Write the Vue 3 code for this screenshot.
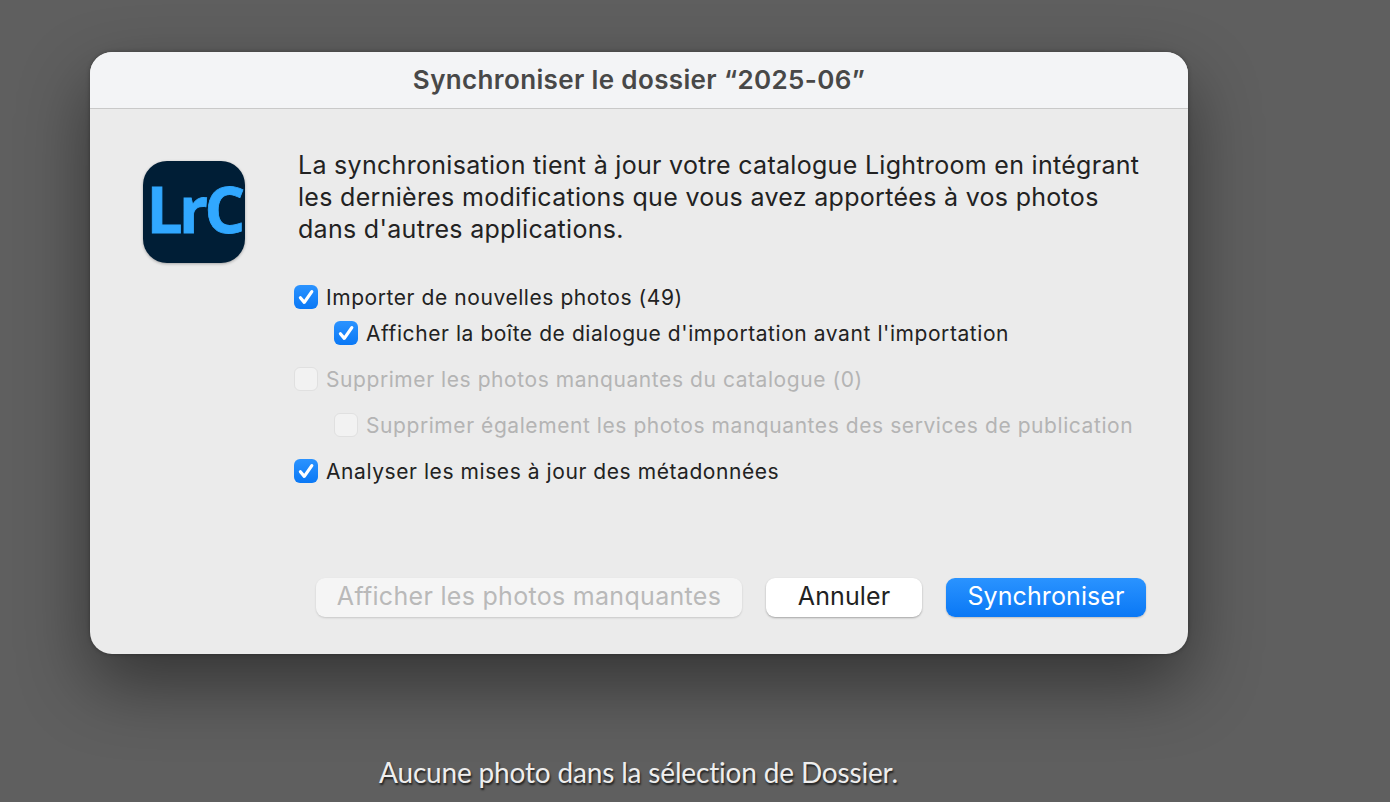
<template>
  <div class="desktop">
    <div class="dialog">
      <div class="titlebar">Synchroniser le dossier “2025-06”</div>
      <div class="body">
        <div class="intro">
          <div class="app-icon"><span>LrC</span></div>
          <p class="message">
            La synchronisation tient à jour votre catalogue Lightroom en intégrant<br />
            les dernières modifications que vous avez apportées à vos photos<br />
            dans d'autres applications.
          </p>
        </div>
        <div class="options">
          <div
            v-for="opt in options"
            :key="opt.label"
            class="option"
            :class="{ sub: opt.sub, disabled: !opt.checked, spaced: opt.spaced }"
          >
            <span class="box" :class="{ checked: opt.checked }">
              <svg v-if="opt.checked" viewBox="0 0 24 24" width="24" height="24">
                <path d="M6.4 12.8 L10.3 17.4 L17.8 6.6" fill="none" stroke="#fff" stroke-width="3.2" stroke-linecap="round" stroke-linejoin="round" />
              </svg>
            </span>
            <span>{{ opt.label }}</span>
          </div>
        </div>
        <div class="actions">
          <button class="btn btn-disabled">Afficher les photos manquantes</button>
          <button class="btn btn-cancel">Annuler</button>
          <button class="btn btn-primary">Synchroniser</button>
        </div>
      </div>
    </div>
    <div class="status">Aucune photo dans la sélection de Dossier.</div>
  </div>
</template>

<script setup>
const options = [
  { label: 'Importer de nouvelles photos (49)', checked: true, sub: false, spaced: false },
  { label: "Afficher la boîte de dialogue d'importation avant l'importation", checked: true, sub: true, spaced: false },
  { label: 'Supprimer les photos manquantes du catalogue (0)', checked: false, sub: false, spaced: true },
  { label: 'Supprimer également les photos manquantes des services de publication', checked: false, sub: true, spaced: true },
  { label: 'Analyser les mises à jour des métadonnées', checked: true, sub: false, spaced: true }
]
</script>

<style>
html, body {
  margin: 0;
  background: #5f5f5f;
}
</style>

<style scoped>
.desktop {
  width: 1390px;
  height: 802px;
  overflow: hidden;
  box-sizing: border-box;
  padding: 52px 0 0 90px;
  background: #5f5f5f;
  font-family: Inter, "Liberation Sans", sans-serif;
}

.dialog {
  width: 1098px;
  height: 602px;
  border-radius: 22px;
  background: #ebebeb;
  overflow: hidden;
  box-shadow: 0 30px 70px rgba(0, 0, 0, 0.45), 0 0 4px rgba(0, 0, 0, 0.3);
  display: flex;
  flex-direction: column;
}

.titlebar {
  height: 57px;
  box-sizing: border-box;
  padding-bottom: 2px;
  border-bottom: 1px solid #c9c9c9;
  background: #f3f4f6;
  display: flex;
  align-items: center;
  justify-content: center;
  font-size: 26px;
  font-weight: 600;
  letter-spacing: 0.36px;
  color: #484848;
}

.body {
  flex: 1;
  display: flex;
  flex-direction: column;
  padding: 40px 42px 37px 53px;
}

.intro {
  display: flex;
  gap: 53px;
}

.app-icon {
  width: 102px;
  height: 102px;
  margin-top: 12px;
  border-radius: 24px;
  background: #001e36;
  display: flex;
  align-items: center;
  justify-content: center;
  box-shadow: 0 1px 3px rgba(0, 0, 0, 0.3);
}

.app-icon span {
  padding-bottom: 6px;
  font-family: "Open Sans", sans-serif;
  font-weight: 700;
  font-size: 64px;
  line-height: 1.2;
  letter-spacing: -3.6px;
  -webkit-text-stroke: 0.8px #31a8ff;
  color: #31a8ff;
}

.message {
  margin: 0;
  font-size: 25px;
  letter-spacing: 0.3px;
  line-height: 32px;
  color: #222;
  white-space: nowrap;
}

.options {
  margin-top: 16px;
  margin-left: 151px;
  display: flex;
  flex-direction: column;
  font-size: 21px;
  letter-spacing: 0.57px;
  color: #222;
}

.option {
  height: 36px;
  display: flex;
  align-items: center;
  gap: 8px;
}

.option.disabled {
  color: #b4b4b4;
}

.option.spaced {
  margin-top: 10px;
}

.option.sub {
  margin-left: 40px;
}

.box {
  width: 24px;
  height: 24px;
  box-sizing: border-box;
  border-radius: 6px;
  background: #f2f2f2;
  border: 1px solid #e0e0e0;
}

.box.checked {
  border: none;
  background: linear-gradient(#2b93ff, #0a78f5);
}

.box svg {
  display: block;
}

.actions {
  margin-top: auto;
  display: flex;
  justify-content: flex-end;
  gap: 24px;
}

.btn {
  height: 39px;
  padding: 0 0 3px;
  border: none;
  border-radius: 9px;
  font-family: inherit;
  font-size: 25px;
  letter-spacing: 0.1px;
}

.btn-disabled {
  width: 426px;
  letter-spacing: 0.3px;
  background: #f5f5f5;
  color: #b9b9b9;
  box-shadow: 0 1px 2px rgba(0, 0, 0, 0.15);
}

.btn-cancel {
  width: 156px;
  background: #fff;
  color: #222;
  box-shadow: 0 1px 2px rgba(0, 0, 0, 0.3);
}

.btn-primary {
  width: 200px;
  background: linear-gradient(#2a93ff, #0a78f5);
  color: #fff;
  box-shadow: 0 1px 2px rgba(0, 0, 0, 0.2);
}

.status {
  margin: 101px 0 0 289px;
  font-family: Lato, sans-serif;
  font-size: 28px;
  letter-spacing: -0.17px;
  color: #eee;
  text-shadow: 1px 2px 2px rgba(0, 0, 0, 0.7);
  white-space: nowrap;
}
</style>
